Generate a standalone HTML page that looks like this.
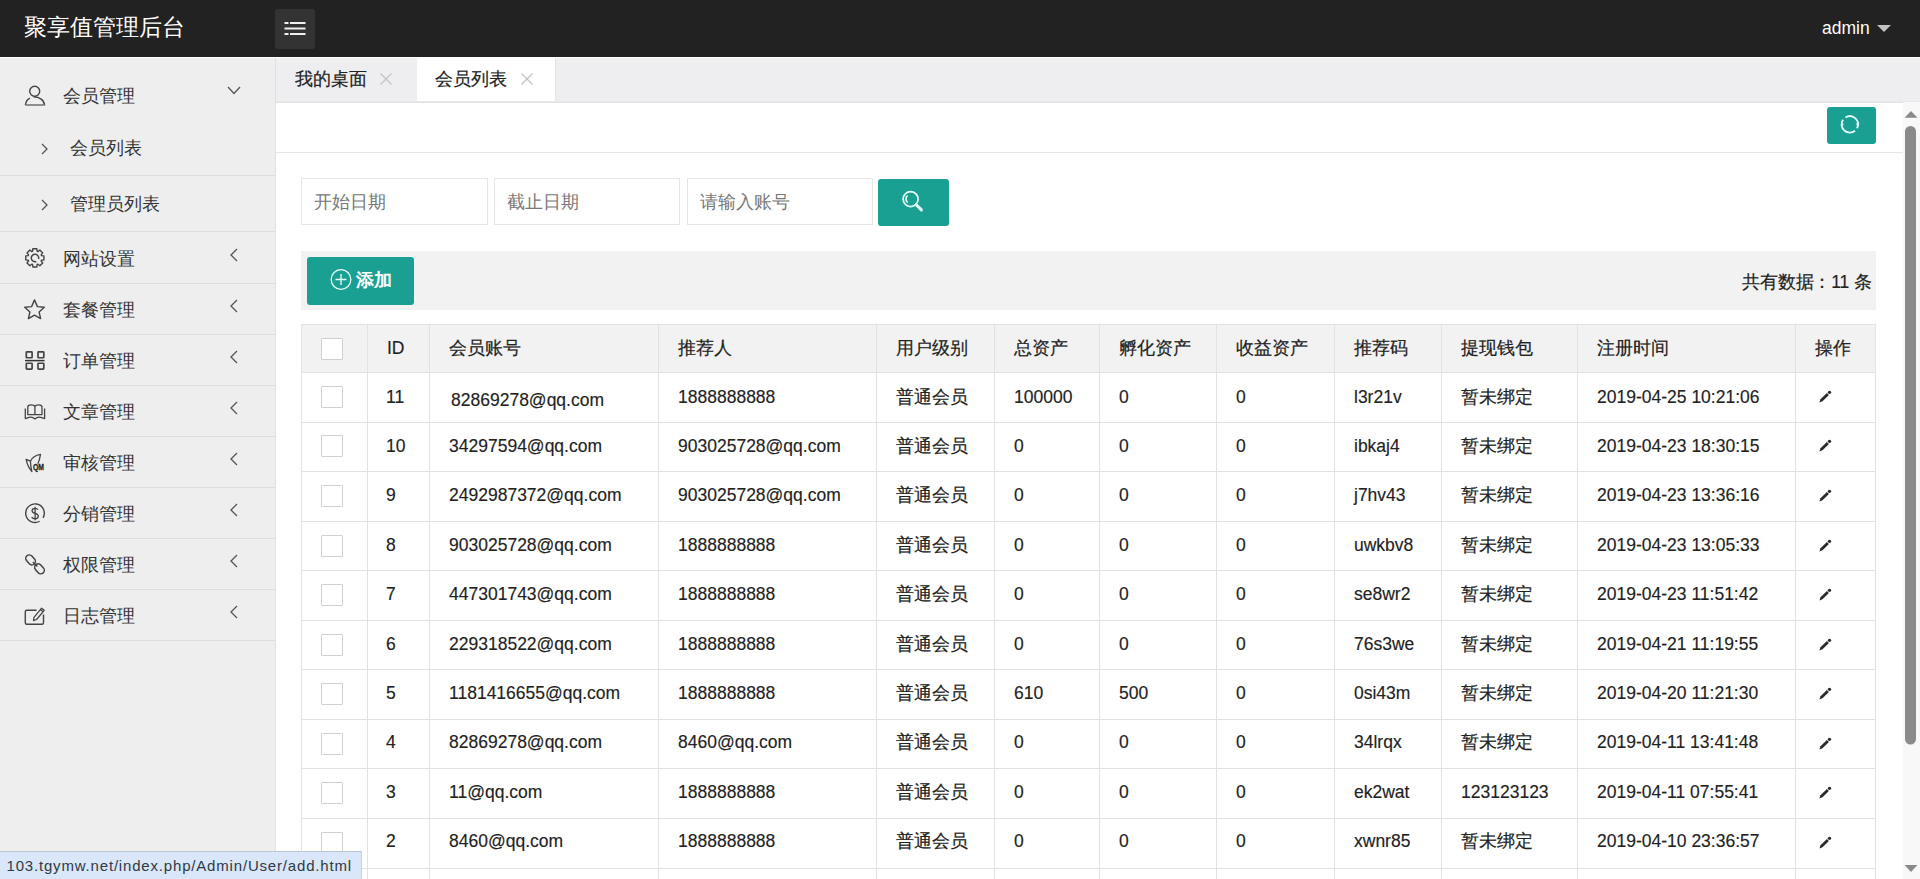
<!DOCTYPE html>
<html><head><meta charset="utf-8"><title>聚享值管理后台</title>
<style>
*{box-sizing:border-box;margin:0;padding:0}
html,body{width:1920px;height:879px;overflow:hidden;background:#fff}
body{position:relative;font-family:"Liberation Sans",sans-serif;color:#333;font-size:17.5px}
.a{position:absolute}
.t{position:absolute;white-space:nowrap}
.b{-webkit-text-stroke:0.15px currentColor}
svg{position:absolute;overflow:visible}
.b .c{-webkit-text-stroke:0.2px currentColor}
</style></head><body>

<div class="a" style="left:0;top:0;width:1920px;height:57px;background:#222"></div>
<div class="a" style="left:0;top:57px;width:1920px;height:1px;background:#fff"></div>
<div class="t" style="left:24px;top:13.5px;line-height:28px;font-size:22.5px;color:#fff">聚享值管理后台</div>
<div class="a" style="left:275px;top:9px;width:40px;height:40px;background:#333;border-radius:3px"></div>
<svg style="left:275px;top:9px" width="40" height="40" viewBox="0 0 40 40"><g fill="#f0f0f0"><rect x="9.5" y="13" width="4" height="2"/><rect x="15" y="13" width="15.5" height="2"/><rect x="9.5" y="18.5" width="21" height="2"/><rect x="9.5" y="24" width="4" height="2"/><rect x="15" y="24" width="15.5" height="2"/></g></svg>
<div class="t" style="left:1822px;top:18px;line-height:20px;font-size:17.5px;color:#fff">admin</div>
<svg style="left:1877px;top:25px" width="14" height="7" viewBox="0 0 14 7"><path d="M0 0H14L7 7Z" fill="#c2c2c2"/></svg>
<div class="a" style="left:0;top:58px;width:276px;height:821px;background:#eee;border-right:1px solid #e0e0e0"></div>
<svg style="left:20px;top:81px" width="30" height="30" viewBox="0 0 30 30"><circle cx="14.7" cy="10.2" r="5" fill="none" stroke="#444" stroke-width="1.4"/><path d="M5.4 24.2C5.8 20.5 7.5 18.3 10 17.2 M13.6 15.8C19.5 15.9 24.2 19 24.6 24.2" fill="none" stroke="#444" stroke-width="1.4"/><path d="M5.4 24H24.6" stroke="#777" stroke-width="1.6"/></svg>
<div class="t" style="left:63px;top:84.0px;line-height:24px;font-size:17.5px;color:#333"><span class="c">会员管理</span></div>
<svg style="left:227px;top:86px" width="14" height="9" viewBox="0 0 14 9"><path d="M1 1L7 7.5L13 1" fill="none" stroke="#555" stroke-width="1.3"/></svg>
<svg style="left:40px;top:142px" width="10" height="14" viewBox="0 0 10 14"><path d="M2 2L7 7L2 12" fill="none" stroke="#555" stroke-width="1.3"/></svg>
<div class="t" style="left:70px;top:136.0px;line-height:24px;font-size:17.5px;color:#333"><span class="c">会员列表</span></div>
<svg style="left:40px;top:198px" width="10" height="14" viewBox="0 0 10 14"><path d="M2 2L7 7L2 12" fill="none" stroke="#555" stroke-width="1.3"/></svg>
<div class="t" style="left:70px;top:192.0px;line-height:24px;font-size:17.5px;color:#333"><span class="c">管理员列表</span></div>
<div class="a" style="left:0;top:175px;width:275px;height:1px;background:#dedede"></div>
<div class="a" style="left:0;top:231px;width:275px;height:1px;background:#dedede"></div>
<div class="t" style="left:63px;top:247.0px;line-height:24px;font-size:17.5px;color:#333"><span class="c">网站设置</span></div>
<svg style="left:229px;top:248px" width="10" height="14" viewBox="0 0 10 14"><path d="M8 1L2 7L8 13" fill="none" stroke="#555" stroke-width="1.3"/></svg>
<div class="a" style="left:0;top:283px;width:275px;height:1px;background:#dedede"></div>
<div class="t" style="left:63px;top:298.0px;line-height:24px;font-size:17.5px;color:#333"><span class="c">套餐管理</span></div>
<svg style="left:229px;top:299px" width="10" height="14" viewBox="0 0 10 14"><path d="M8 1L2 7L8 13" fill="none" stroke="#555" stroke-width="1.3"/></svg>
<div class="a" style="left:0;top:334px;width:275px;height:1px;background:#dedede"></div>
<div class="t" style="left:63px;top:349.0px;line-height:24px;font-size:17.5px;color:#333"><span class="c">订单管理</span></div>
<svg style="left:229px;top:350px" width="10" height="14" viewBox="0 0 10 14"><path d="M8 1L2 7L8 13" fill="none" stroke="#555" stroke-width="1.3"/></svg>
<div class="a" style="left:0;top:385px;width:275px;height:1px;background:#dedede"></div>
<div class="t" style="left:63px;top:400.0px;line-height:24px;font-size:17.5px;color:#333"><span class="c">文章管理</span></div>
<svg style="left:229px;top:401px" width="10" height="14" viewBox="0 0 10 14"><path d="M8 1L2 7L8 13" fill="none" stroke="#555" stroke-width="1.3"/></svg>
<div class="a" style="left:0;top:436px;width:275px;height:1px;background:#dedede"></div>
<div class="t" style="left:63px;top:451.0px;line-height:24px;font-size:17.5px;color:#333"><span class="c">审核管理</span></div>
<svg style="left:229px;top:452px" width="10" height="14" viewBox="0 0 10 14"><path d="M8 1L2 7L8 13" fill="none" stroke="#555" stroke-width="1.3"/></svg>
<div class="a" style="left:0;top:487px;width:275px;height:1px;background:#dedede"></div>
<div class="t" style="left:63px;top:502.0px;line-height:24px;font-size:17.5px;color:#333"><span class="c">分销管理</span></div>
<svg style="left:229px;top:503px" width="10" height="14" viewBox="0 0 10 14"><path d="M8 1L2 7L8 13" fill="none" stroke="#555" stroke-width="1.3"/></svg>
<div class="a" style="left:0;top:538px;width:275px;height:1px;background:#dedede"></div>
<div class="t" style="left:63px;top:553.0px;line-height:24px;font-size:17.5px;color:#333"><span class="c">权限管理</span></div>
<svg style="left:229px;top:554px" width="10" height="14" viewBox="0 0 10 14"><path d="M8 1L2 7L8 13" fill="none" stroke="#555" stroke-width="1.3"/></svg>
<div class="a" style="left:0;top:589px;width:275px;height:1px;background:#dedede"></div>
<div class="t" style="left:63px;top:604.0px;line-height:24px;font-size:17.5px;color:#333"><span class="c">日志管理</span></div>
<svg style="left:229px;top:605px" width="10" height="14" viewBox="0 0 10 14"><path d="M8 1L2 7L8 13" fill="none" stroke="#555" stroke-width="1.3"/></svg>
<div class="a" style="left:0;top:640px;width:275px;height:1px;background:#dedede"></div>
<svg style="left:20px;top:245px" width="30" height="30" viewBox="0 0 30 30"><path d="M12.57 6.28 L12.84 3.82 L16.86 3.82 L17.13 6.28 L17.92 6.61 L19.85 5.06 L22.69 7.90 L21.14 9.83 L21.47 10.62 L23.93 10.89 L23.93 14.91 L21.47 15.18 L21.14 15.97 L22.69 17.90 L19.85 20.74 L17.92 19.19 L17.13 19.52 L16.86 21.98 L12.84 21.98 L12.57 19.52 L11.78 19.19 L9.85 20.74 L7.01 17.90 L8.56 15.97 L8.23 15.18 L5.77 14.91 L5.77 10.89 L8.23 10.62 L8.56 9.83 L7.01 7.90 L9.85 5.06 L11.78 6.61Z" fill="none" stroke="#444" stroke-width="1.4" stroke-linejoin="round"/><path d="M16.27 16.48A3.70 3.70 0 1 1 18.57 13.96" fill="none" stroke="#444" stroke-width="1.5"/></svg>
<svg style="left:20px;top:296px" width="30" height="30" viewBox="0 0 30 30"><path d="M14.5 3.9L17.4 10.6L24.3 11.3L19.1 16.0L20.6 22.6L14.5 19.2L8.4 22.6L9.9 16.0L4.7 11.3L11.6 10.6Z" fill="none" stroke="#444" stroke-width="1.4" stroke-linejoin="round"/></svg>
<svg style="left:20px;top:347px" width="30" height="30" viewBox="0 0 30 30"><rect x="6.3" y="4.95" width="5.8" height="5.8" rx="0.6" fill="none" stroke="#444" stroke-width="1.7"/><rect x="18" y="4.95" width="5.8" height="5.8" rx="0.6" fill="none" stroke="#444" stroke-width="1.7"/><path d="M5 13.6H24.6" stroke="#333" stroke-width="1.5"/><rect x="6.3" y="16.25" width="5.8" height="5.8" rx="0.6" fill="none" stroke="#444" stroke-width="1.7"/><rect x="18" y="16.25" width="5.8" height="5.8" rx="0.6" fill="none" stroke="#444" stroke-width="1.7"/></svg>
<svg style="left:20px;top:398px" width="30" height="30" viewBox="0 0 30 30"><path d="M7.8 16.6V9C7.8 7.2 8.5 6.8 11 6.8C13 6.8 14.6 7.5 14.9 8.5C15.2 7.5 16.8 6.8 18.8 6.8C21.3 6.8 22 7.2 22 9V16.6Z M14.9 8.5V16.6" fill="none" stroke="#444" stroke-width="1.3" stroke-linejoin="round"/><path d="M5.3 10.6V20.6L9 19.4C11.5 18.8 13.5 19.6 14.9 20.9C16.3 19.6 18.3 18.8 20.8 19.4L24.6 20.6V10.6" fill="none" stroke="#444" stroke-width="1.3" stroke-linejoin="round"/></svg>
<svg style="left:20px;top:449px" width="30" height="30" viewBox="0 0 30 30"><path d="M6.1 10.3L10.4 12.2C12 8.6 15.8 6 20.5 5.3C20 8.5 19.3 11.8 17.8 14.8 M10.4 12.2C10.6 15.8 11 19.5 11.9 22.5C8.9 19.2 7 14.5 6.1 10.3Z" fill="none" stroke="#444" stroke-width="1.3" stroke-linejoin="round"/><text x="13" y="21" font-family="Liberation Sans" font-weight="bold" font-size="9" fill="#222" stroke="#222" stroke-width="0.3" textLength="11" lengthAdjust="spacingAndGlyphs">QM</text></svg>
<svg style="left:20px;top:500px" width="30" height="30" viewBox="0 0 30 30"><path d="M19.65 21.25A9.30 9.30 0 1 1 23.05 17.85" fill="none" stroke="#444" stroke-width="1.4"/><path d="M17.9 9.6C17.3 8.8 16.4 8.3 15.1 8.3C13.3 8.3 12.1 9.3 12.1 10.7C12.1 14.2 18.3 12.6 18.3 16.1C18.3 17.7 16.9 18.8 15.1 18.8C13.5 18.8 12.3 18.1 11.6 17.1 M15.1 6.7V20.2" fill="none" stroke="#444" stroke-width="1.3"/></svg>
<svg style="left:20px;top:551px" width="30" height="30" viewBox="0 0 30 30"><rect x="5.1" y="5.4" width="11" height="7" rx="3.5" transform="rotate(48 10.6 8.9)" fill="none" stroke="#444" stroke-width="1.5"/><rect x="14" y="14.3" width="11" height="7" rx="3.5" transform="rotate(48 19.5 17.8)" fill="none" stroke="#444" stroke-width="1.5"/><path d="M12.8 11L17.4 15.6" stroke="#444" stroke-width="1.4"/></svg>
<svg style="left:20px;top:602px" width="30" height="30" viewBox="0 0 30 30"><path d="M16.6 8.2H6.8C5.9 8.2 5.3 8.8 5.3 9.7V20.7C5.3 21.6 5.9 22.2 6.8 22.2H22C22.9 22.2 23.5 21.6 23.5 20.7V12.5" fill="none" stroke="#444" stroke-width="1.4"/><path d="M13.5 18.6L14 15.4L21.6 6.2L24.2 8.3L16.6 17.5Z M20.5 7.6L23.1 9.7" fill="none" stroke="#444" stroke-width="1.3" stroke-linejoin="round"/></svg>
<div class="a" style="left:276px;top:58px;width:1644px;height:45px;background:#eeeef0;border-bottom:1px solid #e2e2e2"></div>
<div class="a" style="left:276px;top:58px;width:1644px;height:4px;background:#f1f1f2"></div>
<div class="a" style="left:276px;top:101px;width:1644px;height:1px;background:#e8e8e9"></div>
<div class="a" style="left:417px;top:58px;width:139px;height:43px;background:#fff;border-right:1px solid #e6e6e6"></div>
<div class="t b" style="left:295px;top:67px;line-height:24px;font-size:17.5px;color:#222"><span class="c">我的桌面</span></div>
<div class="t b" style="left:435px;top:67px;line-height:24px;font-size:17.5px;color:#222"><span class="c">会员列表</span></div>
<svg style="left:380px;top:73px" width="12" height="12" viewBox="0 0 12 12"><path d="M0.5 0.5L11.5 11.5M11.5 0.5L0.5 11.5" stroke="#c4c4c4" stroke-width="1.3"/></svg>
<svg style="left:520.5px;top:73px" width="12" height="12" viewBox="0 0 12 12"><path d="M0.5 0.5L11.5 11.5M11.5 0.5L0.5 11.5" stroke="#c4c4c4" stroke-width="1.3"/></svg>
<div class="a" style="left:1827px;top:107px;width:49px;height:37px;background:#1aa093;border-radius:3px"></div>
<svg style="left:1827px;top:107px" width="49" height="37" viewBox="0 0 49 37"><path d="M18.45 10.45A8.20 8.20 0 0 1 30.04 21.25" fill="none" stroke="#dffcf8" stroke-width="1.9"/><path d="M28.07 23.68A8.20 8.20 0 0 1 16.00 12.81" fill="none" stroke="#dffcf8" stroke-width="1.9"/><path d="M14.2 15.2L16.8 17.6L14.6 19.2Z" fill="#dffcf8"/><path d="M31.4 19.6L28.8 17.2L31 15.6Z" fill="#dffcf8"/></svg>
<div class="a" style="left:276px;top:152px;width:1627px;height:1px;background:#e6e6e6"></div>
<div class="a" style="left:301px;top:178px;width:187px;height:47px;border:1px solid #e6e6e6;background:#fff"></div>
<div class="t" style="left:314px;top:190px;line-height:24px;font-size:17.5px;color:#777"><span class="c">开始日期</span></div>
<div class="a" style="left:494px;top:178px;width:186px;height:47px;border:1px solid #e6e6e6;background:#fff"></div>
<div class="t" style="left:507px;top:190px;line-height:24px;font-size:17.5px;color:#777"><span class="c">截止日期</span></div>
<div class="a" style="left:686.5px;top:178px;width:186.0px;height:47px;border:1px solid #e6e6e6;background:#fff"></div>
<div class="t" style="left:699.5px;top:190px;line-height:24px;font-size:17.5px;color:#777"><span class="c">请输入账号</span></div>
<div class="a" style="left:878px;top:179px;width:71px;height:46.5px;background:#1aa093;border-radius:3px"></div>
<svg style="left:878px;top:179px" width="71" height="47" viewBox="0 0 71 47"><circle cx="32.6" cy="20.1" r="7.5" fill="none" stroke="#e6fffb" stroke-width="1.8"/><path d="M38.2 25.7L43.4 30.9" stroke="#e6fffb" stroke-width="3" stroke-linecap="round"/><path d="M29.6 16.6A4.6 4.6 0 0 0 29.6 23.6" fill="none" stroke="#e6fffb" stroke-width="1.6"/></svg>
<div class="a" style="left:301px;top:251px;width:1575px;height:59px;background:#f2f2f2"></div>
<div class="a" style="left:307px;top:257px;width:107px;height:48px;background:#1aa093;border-radius:3px"></div>
<svg style="left:307px;top:257px" width="107" height="48" viewBox="0 0 107 48"><circle cx="34" cy="22.5" r="9.8" fill="none" stroke="#e8fffc" stroke-width="1.3"/><path d="M34 17V28M28.5 22.5H39.5" stroke="#e8fffc" stroke-width="1.3"/></svg>
<div class="t" style="left:356px;top:268px;line-height:24px;font-size:17.5px;color:#fff;font-weight:bold"><span class="c">添加</span></div>
<div class="t b" style="left:1742px;top:270px;letter-spacing:-0.15px;line-height:24px;font-size:17.5px;color:#222"><span class="c">共有数据：</span>11 <span class="c">条</span></div>
<div class="a" style="left:301px;top:324px;width:1575px;height:48px;background:#f2f2f2"></div>
<div class="a" style="left:301px;top:324.00px;width:1575px;height:1px;background:#e2e2e2"></div>
<div class="a" style="left:301px;top:372.00px;width:1575px;height:1px;background:#e2e2e2"></div>
<div class="a" style="left:301px;top:421.56px;width:1575px;height:1px;background:#e2e2e2"></div>
<div class="a" style="left:301px;top:471.12px;width:1575px;height:1px;background:#e2e2e2"></div>
<div class="a" style="left:301px;top:520.68px;width:1575px;height:1px;background:#e2e2e2"></div>
<div class="a" style="left:301px;top:570.24px;width:1575px;height:1px;background:#e2e2e2"></div>
<div class="a" style="left:301px;top:619.80px;width:1575px;height:1px;background:#e2e2e2"></div>
<div class="a" style="left:301px;top:669.36px;width:1575px;height:1px;background:#e2e2e2"></div>
<div class="a" style="left:301px;top:718.92px;width:1575px;height:1px;background:#e2e2e2"></div>
<div class="a" style="left:301px;top:768.48px;width:1575px;height:1px;background:#e2e2e2"></div>
<div class="a" style="left:301px;top:818.04px;width:1575px;height:1px;background:#e2e2e2"></div>
<div class="a" style="left:301px;top:867.60px;width:1575px;height:1px;background:#e2e2e2"></div>
<div class="a" style="left:301px;top:917.16px;width:1575px;height:1px;background:#e2e2e2"></div>
<div class="a" style="left:301.00px;top:324px;width:1px;height:555px;background:#e2e2e2"></div>
<div class="a" style="left:367.00px;top:324px;width:1px;height:555px;background:#e2e2e2"></div>
<div class="a" style="left:429.00px;top:324px;width:1px;height:555px;background:#e2e2e2"></div>
<div class="a" style="left:658.00px;top:324px;width:1px;height:555px;background:#e2e2e2"></div>
<div class="a" style="left:876.00px;top:324px;width:1px;height:555px;background:#e2e2e2"></div>
<div class="a" style="left:994.00px;top:324px;width:1px;height:555px;background:#e2e2e2"></div>
<div class="a" style="left:1099.00px;top:324px;width:1px;height:555px;background:#e2e2e2"></div>
<div class="a" style="left:1216.00px;top:324px;width:1px;height:555px;background:#e2e2e2"></div>
<div class="a" style="left:1334.00px;top:324px;width:1px;height:555px;background:#e2e2e2"></div>
<div class="a" style="left:1441.00px;top:324px;width:1px;height:555px;background:#e2e2e2"></div>
<div class="a" style="left:1577.00px;top:324px;width:1px;height:555px;background:#e2e2e2"></div>
<div class="a" style="left:1795.00px;top:324px;width:1px;height:555px;background:#e2e2e2"></div>
<div class="a" style="left:1875.00px;top:324px;width:1px;height:555px;background:#e2e2e2"></div>
<div class="a" style="left:321px;top:337.5px;width:22px;height:22px;border:1px solid #d0d0d0;border-radius:1px;background:#fff"></div>
<div class="t b" style="left:387.0px;top:336.0px;line-height:24px;color:#222">ID</div>
<div class="t b" style="left:449.0px;top:336.0px;line-height:24px;color:#222"><span class="c">会员账号</span></div>
<div class="t b" style="left:678.0px;top:336.0px;line-height:24px;color:#222"><span class="c">推荐人</span></div>
<div class="t b" style="left:896.0px;top:336.0px;line-height:24px;color:#222"><span class="c">用户级别</span></div>
<div class="t b" style="left:1014.0px;top:336.0px;line-height:24px;color:#222"><span class="c">总资产</span></div>
<div class="t b" style="left:1119.0px;top:336.0px;line-height:24px;color:#222"><span class="c">孵化资产</span></div>
<div class="t b" style="left:1236.0px;top:336.0px;line-height:24px;color:#222"><span class="c">收益资产</span></div>
<div class="t b" style="left:1354.0px;top:336.0px;line-height:24px;color:#222"><span class="c">推荐码</span></div>
<div class="t b" style="left:1461.0px;top:336.0px;line-height:24px;color:#222"><span class="c">提现钱包</span></div>
<div class="t b" style="left:1597.0px;top:336.0px;line-height:24px;color:#222"><span class="c">注册时间</span></div>
<div class="t b" style="left:1815.0px;top:336.0px;line-height:24px;color:#222"><span class="c">操作</span></div>
<div class="a" style="left:321px;top:385.8px;width:22px;height:22px;border:1px solid #d0d0d0;border-radius:1px;background:#fff"></div>
<div class="t b" style="left:386.0px;top:384.5px;line-height:24px;color:#222">11</div>
<div class="t b" style="left:451.0px;top:387.5px;line-height:24px;color:#222">82869278@qq.com</div>
<div class="t b" style="left:678.0px;top:384.5px;line-height:24px;color:#222">1888888888</div>
<div class="t b" style="left:896.0px;top:384.5px;line-height:24px;color:#222"><span class="c">普通会员</span></div>
<div class="t b" style="left:1014.0px;top:384.5px;line-height:24px;color:#222">100000</div>
<div class="t b" style="left:1119.0px;top:384.5px;line-height:24px;color:#222">0</div>
<div class="t b" style="left:1236.0px;top:384.5px;line-height:24px;color:#222">0</div>
<div class="t b" style="left:1354.0px;top:384.5px;line-height:24px;color:#222">l3r21v</div>
<div class="t b" style="left:1461.0px;top:384.5px;line-height:24px;color:#222"><span class="c">暂未绑定</span></div>
<div class="t b" style="left:1597.0px;top:384.5px;line-height:24px;color:#222">2019-04-25 10:21:06</div>
<svg style="left:1816px;top:387.8px" width="18" height="16" viewBox="0 0 18 16"><path d="M3.4 14.5L4.5 11.3L10.9 4.9L12.9 6.9L6.5 13.3Z" fill="#2a2a2a"/><circle cx="13.5" cy="4.3" r="1.65" fill="#2a2a2a"/></svg>
<div class="a" style="left:321px;top:435.3px;width:22px;height:22px;border:1px solid #d0d0d0;border-radius:1px;background:#fff"></div>
<div class="t b" style="left:386.0px;top:433.9px;line-height:24px;color:#222">10</div>
<div class="t b" style="left:449.0px;top:433.9px;line-height:24px;color:#222">34297594@qq.com</div>
<div class="t b" style="left:678.0px;top:433.9px;line-height:24px;color:#222">903025728@qq.com</div>
<div class="t b" style="left:896.0px;top:433.9px;line-height:24px;color:#222"><span class="c">普通会员</span></div>
<div class="t b" style="left:1014.0px;top:433.9px;line-height:24px;color:#222">0</div>
<div class="t b" style="left:1119.0px;top:433.9px;line-height:24px;color:#222">0</div>
<div class="t b" style="left:1236.0px;top:433.9px;line-height:24px;color:#222">0</div>
<div class="t b" style="left:1354.0px;top:433.9px;line-height:24px;color:#222">ibkaj4</div>
<div class="t b" style="left:1461.0px;top:433.9px;line-height:24px;color:#222"><span class="c">暂未绑定</span></div>
<div class="t b" style="left:1597.0px;top:433.9px;line-height:24px;color:#222">2019-04-23 18:30:15</div>
<svg style="left:1816px;top:437.3px" width="18" height="16" viewBox="0 0 18 16"><path d="M3.4 14.5L4.5 11.3L10.9 4.9L12.9 6.9L6.5 13.3Z" fill="#2a2a2a"/><circle cx="13.5" cy="4.3" r="1.65" fill="#2a2a2a"/></svg>
<div class="a" style="left:321px;top:484.9px;width:22px;height:22px;border:1px solid #d0d0d0;border-radius:1px;background:#fff"></div>
<div class="t b" style="left:386.0px;top:483.3px;line-height:24px;color:#222">9</div>
<div class="t b" style="left:449.0px;top:483.3px;line-height:24px;color:#222">2492987372@qq.com</div>
<div class="t b" style="left:678.0px;top:483.3px;line-height:24px;color:#222">903025728@qq.com</div>
<div class="t b" style="left:896.0px;top:483.3px;line-height:24px;color:#222"><span class="c">普通会员</span></div>
<div class="t b" style="left:1014.0px;top:483.3px;line-height:24px;color:#222">0</div>
<div class="t b" style="left:1119.0px;top:483.3px;line-height:24px;color:#222">0</div>
<div class="t b" style="left:1236.0px;top:483.3px;line-height:24px;color:#222">0</div>
<div class="t b" style="left:1354.0px;top:483.3px;line-height:24px;color:#222">j7hv43</div>
<div class="t b" style="left:1461.0px;top:483.3px;line-height:24px;color:#222"><span class="c">暂未绑定</span></div>
<div class="t b" style="left:1597.0px;top:483.3px;line-height:24px;color:#222">2019-04-23 13:36:16</div>
<svg style="left:1816px;top:486.9px" width="18" height="16" viewBox="0 0 18 16"><path d="M3.4 14.5L4.5 11.3L10.9 4.9L12.9 6.9L6.5 13.3Z" fill="#2a2a2a"/><circle cx="13.5" cy="4.3" r="1.65" fill="#2a2a2a"/></svg>
<div class="a" style="left:321px;top:534.5px;width:22px;height:22px;border:1px solid #d0d0d0;border-radius:1px;background:#fff"></div>
<div class="t b" style="left:386.0px;top:532.7px;line-height:24px;color:#222">8</div>
<div class="t b" style="left:449.0px;top:532.7px;line-height:24px;color:#222">903025728@qq.com</div>
<div class="t b" style="left:678.0px;top:532.7px;line-height:24px;color:#222">1888888888</div>
<div class="t b" style="left:896.0px;top:532.7px;line-height:24px;color:#222"><span class="c">普通会员</span></div>
<div class="t b" style="left:1014.0px;top:532.7px;line-height:24px;color:#222">0</div>
<div class="t b" style="left:1119.0px;top:532.7px;line-height:24px;color:#222">0</div>
<div class="t b" style="left:1236.0px;top:532.7px;line-height:24px;color:#222">0</div>
<div class="t b" style="left:1354.0px;top:532.7px;line-height:24px;color:#222">uwkbv8</div>
<div class="t b" style="left:1461.0px;top:532.7px;line-height:24px;color:#222"><span class="c">暂未绑定</span></div>
<div class="t b" style="left:1597.0px;top:532.7px;line-height:24px;color:#222">2019-04-23 13:05:33</div>
<svg style="left:1816px;top:536.5px" width="18" height="16" viewBox="0 0 18 16"><path d="M3.4 14.5L4.5 11.3L10.9 4.9L12.9 6.9L6.5 13.3Z" fill="#2a2a2a"/><circle cx="13.5" cy="4.3" r="1.65" fill="#2a2a2a"/></svg>
<div class="a" style="left:321px;top:584.0px;width:22px;height:22px;border:1px solid #d0d0d0;border-radius:1px;background:#fff"></div>
<div class="t b" style="left:386.0px;top:582.1px;line-height:24px;color:#222">7</div>
<div class="t b" style="left:449.0px;top:582.1px;line-height:24px;color:#222">447301743@qq.com</div>
<div class="t b" style="left:678.0px;top:582.1px;line-height:24px;color:#222">1888888888</div>
<div class="t b" style="left:896.0px;top:582.1px;line-height:24px;color:#222"><span class="c">普通会员</span></div>
<div class="t b" style="left:1014.0px;top:582.1px;line-height:24px;color:#222">0</div>
<div class="t b" style="left:1119.0px;top:582.1px;line-height:24px;color:#222">0</div>
<div class="t b" style="left:1236.0px;top:582.1px;line-height:24px;color:#222">0</div>
<div class="t b" style="left:1354.0px;top:582.1px;line-height:24px;color:#222">se8wr2</div>
<div class="t b" style="left:1461.0px;top:582.1px;line-height:24px;color:#222"><span class="c">暂未绑定</span></div>
<div class="t b" style="left:1597.0px;top:582.1px;line-height:24px;color:#222">2019-04-23 11:51:42</div>
<svg style="left:1816px;top:586.0px" width="18" height="16" viewBox="0 0 18 16"><path d="M3.4 14.5L4.5 11.3L10.9 4.9L12.9 6.9L6.5 13.3Z" fill="#2a2a2a"/><circle cx="13.5" cy="4.3" r="1.65" fill="#2a2a2a"/></svg>
<div class="a" style="left:321px;top:633.6px;width:22px;height:22px;border:1px solid #d0d0d0;border-radius:1px;background:#fff"></div>
<div class="t b" style="left:386.0px;top:631.5px;line-height:24px;color:#222">6</div>
<div class="t b" style="left:449.0px;top:631.5px;line-height:24px;color:#222">229318522@qq.com</div>
<div class="t b" style="left:678.0px;top:631.5px;line-height:24px;color:#222">1888888888</div>
<div class="t b" style="left:896.0px;top:631.5px;line-height:24px;color:#222"><span class="c">普通会员</span></div>
<div class="t b" style="left:1014.0px;top:631.5px;line-height:24px;color:#222">0</div>
<div class="t b" style="left:1119.0px;top:631.5px;line-height:24px;color:#222">0</div>
<div class="t b" style="left:1236.0px;top:631.5px;line-height:24px;color:#222">0</div>
<div class="t b" style="left:1354.0px;top:631.5px;line-height:24px;color:#222">76s3we</div>
<div class="t b" style="left:1461.0px;top:631.5px;line-height:24px;color:#222"><span class="c">暂未绑定</span></div>
<div class="t b" style="left:1597.0px;top:631.5px;line-height:24px;color:#222">2019-04-21 11:19:55</div>
<svg style="left:1816px;top:635.6px" width="18" height="16" viewBox="0 0 18 16"><path d="M3.4 14.5L4.5 11.3L10.9 4.9L12.9 6.9L6.5 13.3Z" fill="#2a2a2a"/><circle cx="13.5" cy="4.3" r="1.65" fill="#2a2a2a"/></svg>
<div class="a" style="left:321px;top:683.1px;width:22px;height:22px;border:1px solid #d0d0d0;border-radius:1px;background:#fff"></div>
<div class="t b" style="left:386.0px;top:681.0px;line-height:24px;color:#222">5</div>
<div class="t b" style="left:449.0px;top:681.0px;line-height:24px;color:#222">1181416655@qq.com</div>
<div class="t b" style="left:678.0px;top:681.0px;line-height:24px;color:#222">1888888888</div>
<div class="t b" style="left:896.0px;top:681.0px;line-height:24px;color:#222"><span class="c">普通会员</span></div>
<div class="t b" style="left:1014.0px;top:681.0px;line-height:24px;color:#222">610</div>
<div class="t b" style="left:1119.0px;top:681.0px;line-height:24px;color:#222">500</div>
<div class="t b" style="left:1236.0px;top:681.0px;line-height:24px;color:#222">0</div>
<div class="t b" style="left:1354.0px;top:681.0px;line-height:24px;color:#222">0si43m</div>
<div class="t b" style="left:1461.0px;top:681.0px;line-height:24px;color:#222"><span class="c">暂未绑定</span></div>
<div class="t b" style="left:1597.0px;top:681.0px;line-height:24px;color:#222">2019-04-20 11:21:30</div>
<svg style="left:1816px;top:685.1px" width="18" height="16" viewBox="0 0 18 16"><path d="M3.4 14.5L4.5 11.3L10.9 4.9L12.9 6.9L6.5 13.3Z" fill="#2a2a2a"/><circle cx="13.5" cy="4.3" r="1.65" fill="#2a2a2a"/></svg>
<div class="a" style="left:321px;top:732.7px;width:22px;height:22px;border:1px solid #d0d0d0;border-radius:1px;background:#fff"></div>
<div class="t b" style="left:386.0px;top:730.4px;line-height:24px;color:#222">4</div>
<div class="t b" style="left:449.0px;top:730.4px;line-height:24px;color:#222">82869278@qq.com</div>
<div class="t b" style="left:678.0px;top:730.4px;line-height:24px;color:#222">8460@qq.com</div>
<div class="t b" style="left:896.0px;top:730.4px;line-height:24px;color:#222"><span class="c">普通会员</span></div>
<div class="t b" style="left:1014.0px;top:730.4px;line-height:24px;color:#222">0</div>
<div class="t b" style="left:1119.0px;top:730.4px;line-height:24px;color:#222">0</div>
<div class="t b" style="left:1236.0px;top:730.4px;line-height:24px;color:#222">0</div>
<div class="t b" style="left:1354.0px;top:730.4px;line-height:24px;color:#222">34lrqx</div>
<div class="t b" style="left:1461.0px;top:730.4px;line-height:24px;color:#222"><span class="c">暂未绑定</span></div>
<div class="t b" style="left:1597.0px;top:730.4px;line-height:24px;color:#222">2019-04-11 13:41:48</div>
<svg style="left:1816px;top:734.7px" width="18" height="16" viewBox="0 0 18 16"><path d="M3.4 14.5L4.5 11.3L10.9 4.9L12.9 6.9L6.5 13.3Z" fill="#2a2a2a"/><circle cx="13.5" cy="4.3" r="1.65" fill="#2a2a2a"/></svg>
<div class="a" style="left:321px;top:782.3px;width:22px;height:22px;border:1px solid #d0d0d0;border-radius:1px;background:#fff"></div>
<div class="t b" style="left:386.0px;top:779.8px;line-height:24px;color:#222">3</div>
<div class="t b" style="left:449.0px;top:779.8px;line-height:24px;color:#222">11@qq.com</div>
<div class="t b" style="left:678.0px;top:779.8px;line-height:24px;color:#222">1888888888</div>
<div class="t b" style="left:896.0px;top:779.8px;line-height:24px;color:#222"><span class="c">普通会员</span></div>
<div class="t b" style="left:1014.0px;top:779.8px;line-height:24px;color:#222">0</div>
<div class="t b" style="left:1119.0px;top:779.8px;line-height:24px;color:#222">0</div>
<div class="t b" style="left:1236.0px;top:779.8px;line-height:24px;color:#222">0</div>
<div class="t b" style="left:1354.0px;top:779.8px;line-height:24px;color:#222">ek2wat</div>
<div class="t b" style="left:1461.0px;top:779.8px;line-height:24px;color:#222">123123123</div>
<div class="t b" style="left:1597.0px;top:779.8px;line-height:24px;color:#222">2019-04-11 07:55:41</div>
<svg style="left:1816px;top:784.3px" width="18" height="16" viewBox="0 0 18 16"><path d="M3.4 14.5L4.5 11.3L10.9 4.9L12.9 6.9L6.5 13.3Z" fill="#2a2a2a"/><circle cx="13.5" cy="4.3" r="1.65" fill="#2a2a2a"/></svg>
<div class="a" style="left:321px;top:831.8px;width:22px;height:22px;border:1px solid #d0d0d0;border-radius:1px;background:#fff"></div>
<div class="t b" style="left:386.0px;top:829.2px;line-height:24px;color:#222">2</div>
<div class="t b" style="left:449.0px;top:829.2px;line-height:24px;color:#222">8460@qq.com</div>
<div class="t b" style="left:678.0px;top:829.2px;line-height:24px;color:#222">1888888888</div>
<div class="t b" style="left:896.0px;top:829.2px;line-height:24px;color:#222"><span class="c">普通会员</span></div>
<div class="t b" style="left:1014.0px;top:829.2px;line-height:24px;color:#222">0</div>
<div class="t b" style="left:1119.0px;top:829.2px;line-height:24px;color:#222">0</div>
<div class="t b" style="left:1236.0px;top:829.2px;line-height:24px;color:#222">0</div>
<div class="t b" style="left:1354.0px;top:829.2px;line-height:24px;color:#222">xwnr85</div>
<div class="t b" style="left:1461.0px;top:829.2px;line-height:24px;color:#222"><span class="c">暂未绑定</span></div>
<div class="t b" style="left:1597.0px;top:829.2px;line-height:24px;color:#222">2019-04-10 23:36:57</div>
<svg style="left:1816px;top:833.8px" width="18" height="16" viewBox="0 0 18 16"><path d="M3.4 14.5L4.5 11.3L10.9 4.9L12.9 6.9L6.5 13.3Z" fill="#2a2a2a"/><circle cx="13.5" cy="4.3" r="1.65" fill="#2a2a2a"/></svg>
<div class="a" style="left:321px;top:881.4px;width:22px;height:22px;border:1px solid #d0d0d0;border-radius:1px;background:#fff"></div>
<div class="t b" style="left:386.0px;top:878.6px;line-height:24px;color:#222">1</div>
<div class="a" style="left:1903px;top:102px;width:17px;height:777px;background:#f8f8f8"></div>
<svg style="left:1903px;top:102px" width="17" height="777" viewBox="0 0 17 777"><path d="M1.5 15.8H14.5L8 9Z" fill="#8a8a8a"/><rect x="2" y="24" width="11" height="618.5" rx="5.5" fill="#8a8a8a"/><path d="M1.5 763H14.5L8 770Z" fill="#8a8a8a"/></svg>
<div class="a" style="left:0;top:851px;width:362px;height:28px;background:#dae6f9;border-top:1px solid #bcc6d3;border-right:1px solid #c8d2e0"></div>
<div class="t" style="left:6.5px;top:856px;line-height:20px;font-size:15px;letter-spacing:0.82px;color:#2e3a46">103.tgymw.net/index.php/Admin/User/add.html</div>
</body></html>
